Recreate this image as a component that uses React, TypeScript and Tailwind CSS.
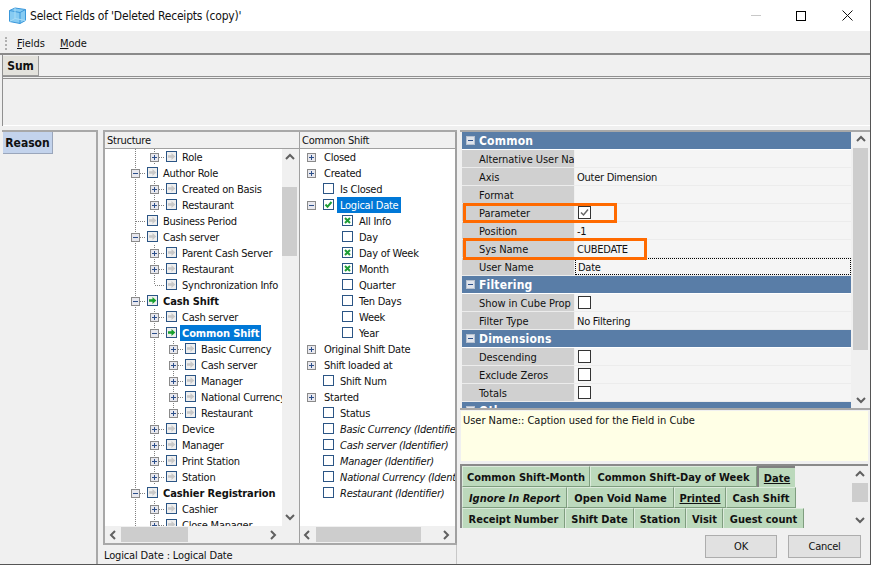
const structure = [
  { t: 'Role', l: 1, e: '+' },
  { t: 'Author Role', l: 0, e: '-' },
  { t: 'Created on Basis', l: 1, e: '+' },
  { t: 'Restaurant', l: 1, e: '+' },
  { t: 'Business Period', l: 0, e: '' },
  { t: 'Cash server', l: 0, e: '-' },
  { t: 'Parent Cash Server', l: 1, e: '+' },
  { t: 'Restaurant', l: 1, e: '+' },
  { t: 'Synchronization Info', l: 1, e: '', last: true },
  { t: 'Cash Shift', l: 0, e: '-', on: true },
  { t: 'Cash server', l: 1, e: '+' },
  { t: 'Common Shift', l: 1, e: '-', on: true, sel: true },
  { t: 'Basic Currency', l: 2, e: '+' },
  { t: 'Cash server', l: 2, e: '+' },
  { t: 'Manager', l: 2, e: '+' },
  { t: 'National Currency', l: 2, e: '+' },
  { t: 'Restaurant', l: 2, e: '+', last: true },
  { t: 'Device', l: 1, e: '+' },
  { t: 'Manager', l: 1, e: '+' },
  { t: 'Print Station', l: 1, e: '+' },
  { t: 'Station', l: 1, e: '+' },
  { t: 'Cashier Registrarion', l: 0, e: '-', bold: true },
  { t: 'Cashier', l: 1, e: '+' },
  { t: 'Close Manager', l: 1, e: '+' },
];

const commonShift = [
  { t: 'Closed', e: '+' },
  { t: 'Created', e: '+' },
  { t: 'Is Closed', box: '' },
  { t: 'Logical Date', e: '-', box: 'check', sel: true },
  { t: 'All Info', l: 1, box: 'x' },
  { t: 'Day', l: 1, box: '' },
  { t: 'Day of Week', l: 1, box: 'x' },
  { t: 'Month', l: 1, box: 'x' },
  { t: 'Quarter', l: 1, box: '' },
  { t: 'Ten Days', l: 1, box: '' },
  { t: 'Week', l: 1, box: '' },
  { t: 'Year', l: 1, box: '' },
  { t: 'Original Shift Date', e: '+' },
  { t: 'Shift loaded at', e: '+' },
  { t: 'Shift Num', box: '' },
  { t: 'Started', e: '+' },
  { t: 'Status', box: '' },
  { t: 'Basic Currency (Identifier)', box: '', it: true },
  { t: 'Cash server (Identifier)', box: '', it: true },
  { t: 'Manager (Identifier)', box: '', it: true },
  { t: 'National Currency (Identifier)', box: '', it: true },
  { t: 'Restaurant (Identifier)', box: '', it: true },
];

const props = [
  { head: 'Common' },
  { k: 'Alternative User Na', v: '' },
  { k: 'Axis', v: 'Outer Dimension' },
  { k: 'Format', v: '' },
  { k: 'Parameter', box: 'on' },
  { k: 'Position', v: '-1' },
  { k: 'Sys Name', v: 'CUBEDATE' },
  { k: 'User Name', v: 'Date', focus: true },
  { head: 'Filtering' },
  { k: 'Show in Cube Prop', box: 'off' },
  { k: 'Filter Type', v: 'No Filtering' },
  { head: 'Dimensions' },
  { k: 'Descending', box: 'off' },
  { k: 'Exclude Zeros', box: 'off' },
  { k: 'Totals', box: 'off' },
  { head: 'Other' },
];

const fieldRows = [
  [
    { t: 'Common Shift-Month', w: 'w-[128px]' },
    { t: 'Common Shift-Day of Week', w: 'w-[167px]' },
    { t: 'Date', w: 'w-[38px]', u: true, active: true },
  ],
  [
    { t: 'Ignore In Report', w: 'w-[105px]', it: true },
    { t: 'Open Void Name', w: 'w-[107px]' },
    { t: 'Printed', w: 'w-[52px]', u: true },
    { t: 'Cash Shift', w: 'w-[70px]' },
  ],
  [
    { t: 'Receipt Number', w: 'w-[103px]' },
    { t: 'Shift Date', w: 'w-[69px]' },
    { t: 'Station', w: 'w-[52px]' },
    { t: 'Visit', w: 'w-[37px]' },
    { t: 'Guest count', w: 'w-[81px]' },
  ],
];

const Box = ({ e }: { e: string }) => (
  <g>
    <rect x="5.5" y="4.5" width="8" height="8" fill="#e8e8ee" stroke="#8a8a8a" />
    <path d={e === '+' ? 'M7 8.5h5M9.5 6v5' : 'M7 8.5h5'} stroke="#2c4f8a" />
  </g>
);

const Connector = ({ e, last }: { e: string; last?: boolean }) => (
  <svg width="19" height="16" className="shrink-0">
    <path d={last ? 'M9.5 0V8' : 'M9.5 0V16'} stroke="#808080" strokeDasharray="1 1" />
    <path d="M10 8.5H19" stroke="#808080" strokeDasharray="1 1" />
    {e && <Box e={e} />}
  </svg>
);

const Guide = () => (
  <svg width="19" height="16" className="shrink-0">
    <path d="M9.5 0V16" stroke="#808080" strokeDasharray="1 1" />
  </svg>
);

const FieldIcon = ({ on }: { on?: boolean }) => (
  <svg width="12" height="12" className="shrink-0">
    <rect x="0.5" y="0.5" width="10" height="10" fill="#efefef" stroke="#2b5585" />
    <path d="M2 4.3h3.5V2L9.3 5.5L5.5 9V6.7H2z" fill={on ? '#16a02c' : '#c8c8c8'} />
  </svg>
);

const CheckBox = ({ kind }: { kind: string }) => (
  <svg width="12" height="12" className="shrink-0">
    <rect x="0.5" y="0.5" width="10" height="10" fill="#fff" stroke="#2b5585" />
    {kind === 'x' && <path d="M3 3l5 5M8 3l-5 5" stroke="#1f9d36" strokeWidth="2" />}
    {kind === 'check' && <path d="M2.5 5.5l2 2.3L8.5 3" stroke="#1f9d36" strokeWidth="2" fill="none" />}
  </svg>
);

const Chevron = ({ dir }: { dir: 'up' | 'down' | 'left' | 'right' }) => {
  const d = {
    up: 'M2 7l4-4 4 4',
    down: 'M2 4l4 4 4-4',
    left: 'M8 2L4 6l4 4',
    right: 'M4 2l4 4-4 4',
  }[dir];
  return (
    <svg width="12" height="12" className="shrink-0">
      <path d={d} stroke="#606060" strokeWidth="2" fill="none" />
    </svg>
  );
};

const App = () => {
  return (
    <div className="w-[871px] h-[565px] overflow-hidden flex flex-col bg-[#f0f0f0] text-[#111] text-[11px] leading-4 tracking-[-0.25px] font-['DejaVu_Sans_Condensed',sans-serif] border-r border-b border-[#555]">
      {/* title bar */}
      <div className="h-[31px] shrink-0 bg-white flex items-center pl-[9px] text-[12px] tracking-[-0.2px]">
        <svg width="17" height="17" viewBox="0 0 17 17" className="mr-[4px] shrink-0">
          <path d="M0.5 3.5L6 1l10.5 1.5v11L11 16.5l-10.5-2z" fill="#86cbf2" stroke="#3a97da" />
          <path d="M0.5 3.5L11 5.5v11M11 5.5l5.5-3" fill="none" stroke="#3a97da" />
          <path d="M6 1v10.5l-5.5 3M6 11.5l10.5 2" fill="none" stroke="#a8dcf6" />
        </svg>
        <span>Select Fields of 'Deleted Receipts (copy)'</span>
        <div className="ml-auto flex items-center">
          <div className="w-[10px] h-px bg-[#c8c8c8] mr-[35px]" />
          <div className="w-[10px] h-[10px] border border-black mr-[36px]" />
          <svg width="11" height="11" className="mr-[17px]">
            <path d="M0.5 0.5l10 10M10.5 0.5l-10 10" stroke="#111" />
          </svg>
        </div>
      </div>

      {/* menu */}
      <div className="h-[24px] shrink-0 flex items-center bg-[#efefef] border-b-2 border-[#8a8a8a] pl-[5px] pt-[3px]">
        <div className="w-[3px] h-[13px] border-l-2 border-dotted border-[#b0b0b0] mr-[9px]" />
        <span className="mr-[15px] tracking-normal"><u>F</u>ields</span>
        <span className="tracking-normal"><u>M</u>ode</span>
      </div>

      {/* sum area */}
      <div className="h-[71px] shrink-0 ml-[2px] border-l border-[#909090] flex flex-col">
        <div className="h-[24px] shrink-0 border-b-[3px] border-double border-[#909090] flex pt-px">
          <div className="w-[36px] h-[20px] pt-px bg-[#e3e2dc] border-r border-b border-[#9a9a9a] flex items-center justify-center font-bold text-[12px] tracking-normal">Sum</div>
        </div>
        <div className="flex-1 border-b border-white" />
      </div>

      {/* main */}
      <div className="flex-1 min-h-0 flex pt-[4px]">
        {/* rows drop */}
        <div className="w-[96px] ml-[2px] shrink-0 border-t-2 border-r-2 border-[#a8a8a8]">
          <div className="w-[50px] h-[22px] ml-[1px] bg-[#c3d3ec] border-r border-b border-[#9aa6bb] flex items-center justify-center font-bold text-[12px] tracking-normal">Reason</div>
        </div>

        <div className="ml-[5px] w-[354px] shrink-0 flex flex-col">
          <div className="flex-1 min-h-0 flex border-t-2 border-b-2 border-[#a8a8a8]">
            {/* structure */}
            <div className="w-[196px] shrink-0 flex flex-col border-l-2 border-[#a8a8a8]">
              <div className="h-[17px] shrink-0 pl-[2px] pt-[2px] bg-[#f0f0f0] border-b border-[#a0a0a0] flex items-center">Structure</div>
              <div className="h-[377px] shrink-0 flex">
                <div className="w-[177px] bg-white overflow-hidden pl-[21px] shrink-0">
                  {structure.map((r, i) => (
                    <div key={i} className="h-4 flex items-center whitespace-nowrap">
                      {r.l > 0 && <Guide />}
                      {r.l > 1 && <Guide />}
                      <Connector e={r.e} last={r.last} />
                      <div className="ml-[2px] flex"><FieldIcon on={r.on} /></div>
                      <span className={(r.on || r.bold ? 'font-bold tracking-[-0.1px] ' : '') + (r.sel ? 'bg-[#0078d7] text-white ' : '') + 'ml-[2px] px-[2px] pt-px h-4'}>{r.t}</span>
                    </div>
                  ))}
                </div>
                <div className="w-[15px] flex flex-col items-center">
                  <div className="h-[18px] shrink-0 flex items-center"><Chevron dir="up" /></div>
                  <div className="w-full h-[69px] mt-[20px] shrink-0 bg-[#cdcdcd]" />
                  <div className="mt-auto h-[18px] shrink-0 flex items-center"><Chevron dir="down" /></div>
                </div>
              </div>
              <div className="h-[17px] shrink-0 flex items-center pl-[2px]">
                <Chevron dir="left" />
                <div className="w-[67px] h-[15px] ml-[2px] bg-[#cdcdcd]" />
                <div className="ml-[79px]"><Chevron dir="right" /></div>
              </div>
            </div>

            {/* common shift */}
            <div className="w-[158px] shrink-0 flex flex-col">
              <div className="h-[17px] shrink-0 pl-[2px] pt-[2px] bg-[#f0f0f0] border-l border-r-2 border-b border-[#a0a0a0] flex items-center">Common Shift</div>
              <div className="h-[377px] shrink-0 bg-white overflow-hidden pl-[2px] border-l border-r-2 border-[#a0a0a0]">
                {commonShift.map((r, i) => (
                  <div key={i} className="h-4 flex items-center whitespace-nowrap">
                    <svg width="19" height="16" className="shrink-0">{r.e && <Box e={r.e} />}</svg>
                    {r.l === 1 && <div className="w-[19px] shrink-0" />}
                    {r.box !== undefined && (
                      <div className="ml-[2px] mr-[2px] flex"><CheckBox kind={r.box} /></div>
                    )}
                    <span className={(r.sel ? 'bg-[#0078d7] text-white ' : '') + (r.it ? 'italic ' : '') + 'px-[3px] pt-px h-4'}>{r.t}</span>
                  </div>
                ))}
              </div>
              <div className="h-[17px] shrink-0 flex items-center border-l border-r-2 border-[#a0a0a0] pl-px">
                <Chevron dir="left" />
                <div className="w-[105px] h-[15px] ml-[3px] bg-[#cdcdcd]" />
                <div className="ml-[19px]"><Chevron dir="right" /></div>
              </div>
            </div>
          </div>
          <div className="h-[19px] shrink-0 flex items-center pl-px pt-[3px] tracking-[-0.15px] border-r border-[#c8c8c8]">Logical Date : Logical Date</div>
        </div>

        {/* right side */}
        <div className="ml-[3px] flex-1 min-w-0 flex flex-col relative">
          <div className="h-[278px] shrink-0 flex border-t-2 border-[#a8a8a8] overflow-hidden">
            <div className="ml-[2px] w-[389px] shrink-0">
              {props.map((p, i) =>
                p.head ? (
                  <div key={i} className="h-[18px] flex items-center bg-[#597da7] text-white font-bold text-[12px] tracking-[0.2px] border-b border-white">
                    <svg width="17" height="17" className="shrink-0">
                      <rect x="4.5" y="4.5" width="8" height="8" fill="#dfe4ec" stroke="#b8c2d0" />
                      <path d="M6 8.5h5" stroke="#2c4f8a" />
                    </svg>
                    <span>{p.head}</span>
                  </div>
                ) : (
                  <div key={i} className="h-[18px] flex border-b border-[#ececec]">
                    <div className="w-[112px] shrink-0 bg-[#d0d0d0] pl-[17px] pt-[2px] flex items-center whitespace-nowrap overflow-hidden mr-px tracking-[-0.05px]">{p.k}</div>
                    <div className={(p.focus ? 'border border-dotted border-black ' : '') + 'flex-1 bg-[#f5f5f5] pl-[2px] flex items-center'}>
                      {p.box ? (
                        <svg width="13" height="13" className="ml-px">
                          <rect x="0.5" y="0.5" width="12" height="12" fill="#fff" stroke="#333" />
                          {p.box === 'on' && <path d="M3 6.5l2.5 2.5L10 3.5" stroke="#666" strokeWidth="1.5" fill="none" />}
                        </svg>
                      ) : (
                        <span className="pt-[2px]">{p.v}</span>
                      )}
                    </div>
                  </div>
                )
              )}
            </div>
            <div className="ml-[2px] w-[15px] shrink-0 flex flex-col items-center">
              <div className="h-[16px] shrink-0 flex items-center"><Chevron dir="up" /></div>
              <div className="w-full h-[202px] shrink-0 bg-[#cdcdcd]" />
              <div className="mt-auto h-[16px] shrink-0 flex items-center"><Chevron dir="down" /></div>
            </div>
          </div>

          <div className="h-[2px] shrink-0 bg-[#a8a8a8]" />
          <div className="h-[50px] shrink-0 ml-px mt-px mr-[2px] bg-[#ffffe6] pl-[2px] pt-[2px] tracking-[-0.02px]">User Name:: Caption used for the Field in Cube</div>

          <div className="h-[64px] shrink-0 mt-[3px] mr-[2px] border-t-2 border-l-2 border-[#8a8a8a] flex overflow-hidden tracking-normal">
            <div className="flex-1 min-w-0 overflow-hidden">
              {fieldRows.map((row, i) => (
                <div key={i} className="h-[21px] flex">
                  {row.map((f, j) => (
                    <div
                      key={j}
                      className={
                        f.w +
                        (f.active ? ' border-t-2 border-l-2 border-[#808080]' : ' border-r border-b border-[#7f9d7f] border-t border-t-[#dcebdc] border-l border-l-[#dcebdc]') +
                        (f.it ? ' italic' : '') +
                        (f.u ? ' underline' : '') +
                        ' shrink-0 bg-[#bcd9bc] font-bold pt-[2px] flex items-center justify-center whitespace-nowrap overflow-hidden'
                      }
                    >
                      {f.t}
                    </div>
                  ))}
                </div>
              ))}
            </div>
            <div className="w-[16px] shrink-0 flex flex-col items-center">
              <div className="h-[17px] shrink-0 flex items-center"><Chevron dir="up" /></div>
              <div className="w-full h-[19px] shrink-0 bg-[#cdcdcd]" />
              <div className="mt-auto h-[17px] shrink-0 flex items-center"><Chevron dir="down" /></div>
            </div>
          </div>

          <div className="flex justify-end gap-[11px] mt-[7px] mr-[9px]">
            <div className="w-[72px] h-[23px] bg-[#e1e1e1] border border-[#adadad] flex items-center justify-center">OK</div>
            <div className="w-[73px] h-[23px] bg-[#e1e1e1] border border-[#adadad] flex items-center justify-center">Cancel</div>
          </div>

          {/* orange call-outs */}
          <div className="absolute left-[3px] top-[73px] w-[154px] h-[20px] border-[3px] border-[#ff6a00]" />
          <div className="absolute left-[3px] top-[108px] w-[184px] h-[22px] border-[3px] border-[#ff6a00]" />
        </div>
      </div>
    </div>
  );
};

export default App;
